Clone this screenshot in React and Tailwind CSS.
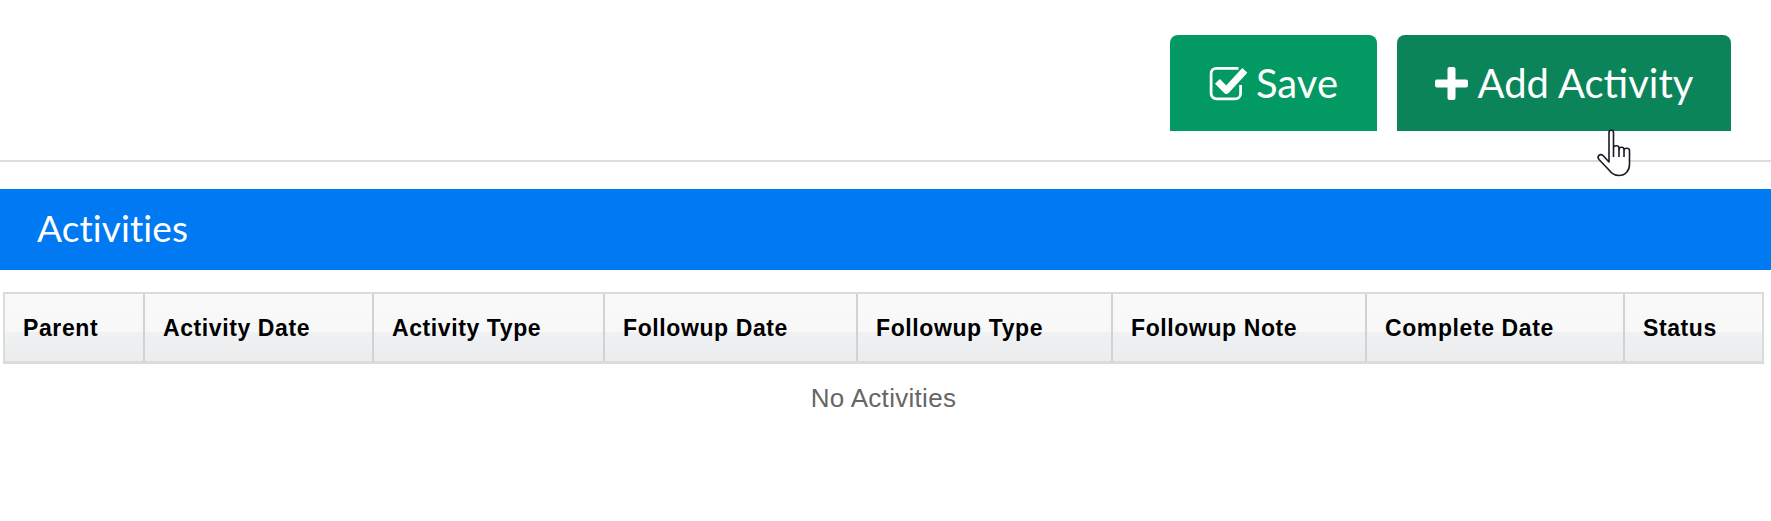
const columns = [
  { label: 'Parent', width: 'w-[140px]' },
  { label: 'Activity Date', width: 'w-[229px]' },
  { label: 'Activity Type', width: 'w-[231px]' },
  { label: 'Followup Date', width: 'w-[253px]' },
  { label: 'Followup Type', width: 'w-[255px]' },
  { label: 'Followup Note', width: 'w-[254px]' },
  { label: 'Complete Date', width: 'w-[258px]' },
  { label: 'Status', width: 'flex-1' },
]

function CheckSquareIcon() {
  return (
    <svg width="40" height="36" viewBox="0 0 38 34" fill="none">
      <path d="M30 19v8a5 5 0 0 1-5 5H7a5 5 0 0 1-5-5V8a5 5 0 0 1 5-5h21" stroke="white" strokeWidth="2.6" />
      <path d="M8 15.500l8.500 8.500L34 5" stroke="white" strokeWidth="6.500" strokeLinejoin="round" />
    </svg>
  )
}

function PlusIcon() {
  return (
    <svg width="33" height="33" viewBox="0 0 33 33" fill="white">
      <path d="M12.500 2a2 2 0 0 1 2-2h4a2 2 0 0 1 2 2v10.500H31a2 2 0 0 1 2 2v4a2 2 0 0 1-2 2H20.500V31a2 2 0 0 1-2 2h-4a2 2 0 0 1-2-2V20.500H2a2 2 0 0 1-2-2v-4a2 2 0 0 1 2-2h10.500z" />
    </svg>
  )
}

function HandCursor() {
  return (
    <svg className="absolute left-[1597px] top-[129px]" width="36" height="48" viewBox="0 0 36 48">
      <path
        d="M12 3.500c0-3 4.500-3 4.500 0v15.500c0-3 5.500-3 5.500 0v1.500c0-3 5-3 5 0v1c0-3 5.500-3 5.500 0v14c0 6-4 11-10.500 11-5 0-7.500-2-10-5.500L2 30.500c-2.500-3 1-6.500 4-4l6 6.500z"
        fill="white"
        stroke="#1a1a24"
        strokeWidth="1.6"
        strokeLinejoin="round"
      />
      <path d="M16.500 19v9M22 20v8M27 21.500v6.500" stroke="#1a1a24" strokeWidth="1.600" />
    </svg>
  )
}

export default function App() {
  return (
    <div className="relative min-h-[521px] bg-white overflow-hidden">
      {/* top buttons */}
      <div className="h-[162px] border-b-2 border-[#dcdcdc] pt-[35px] pr-[40px] flex justify-end gap-5 font-['Lato',sans-serif] text-[40px] text-white">
        <button className="w-[207px] h-[96px] bg-[#029a62] rounded-t-lg flex items-center justify-center gap-[7px]">
          <CheckSquareIcon />
          Save
        </button>
        <button className="w-[334px] h-[96px] bg-[#0b845a] rounded-t-lg flex items-center justify-center gap-[10px]">
          <PlusIcon />
          Add Activity
        </button>
      </div>

      {/* section header */}
      <div className="mt-[27px] h-[81px] bg-[#0079f2] pl-[37px] pb-[3px] flex items-center font-['Lato',sans-serif] text-[37px] tracking-[0.1px] [font-variant-ligatures:none] text-white">
        Activities
      </div>

      {/* table */}
      <div className="mt-[22px] ml-[3px] mr-[7px] font-['Liberation_Sans',Arial,sans-serif]">
        <div className="flex h-[72px] border-2 border-b-[3px] border-[#dbdbdb] bg-[linear-gradient(to_bottom,#f9f9f9_0%,#f8f8f8_56%,#f0f1f3_56%,#ebecee_100%)]">
          {columns.map((col) => (
            <div
              key={col.label}
              className={`${col.width} border-r-2 border-[#d2d2d2] last:border-r-0 pl-[18px] pt-px flex items-center text-[23px] font-bold tracking-[0.6px] text-black`}
            >
              {col.label}
            </div>
          ))}
        </div>
        <div className="mt-[20px] text-center text-[26px] tracking-[0.3px] leading-7 text-[#666666]">No Activities</div>
      </div>

      <HandCursor />
    </div>
  )
}
